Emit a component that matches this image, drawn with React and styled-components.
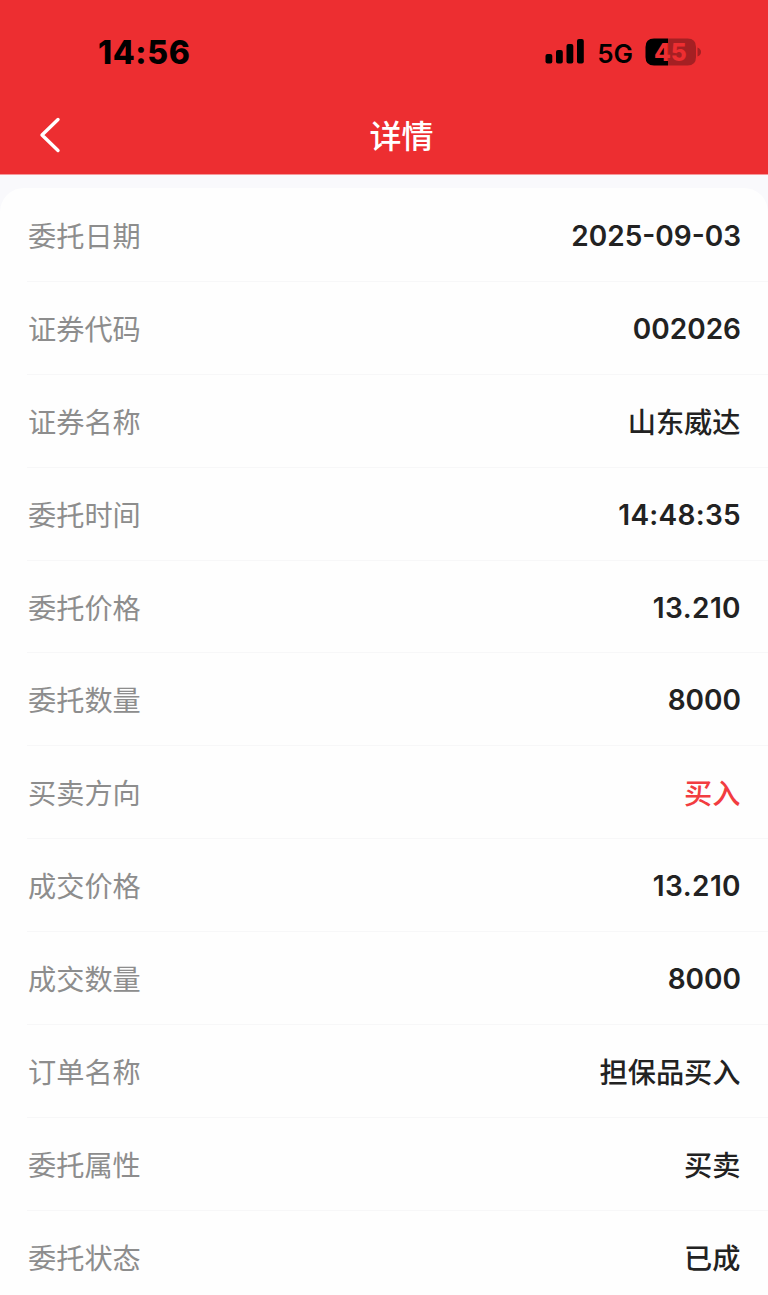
import React from "react";
import styled, { createGlobalStyle } from "styled-components";

const GlobalStyle = createGlobalStyle`
  * {
    box-sizing: border-box;
  }

  body {
    margin: 0;
    background: #f9f9fc;
    font-family: Inter, "Noto Sans CJK SC", sans-serif;
    overflow: hidden;
  }
`;

const orderData = [
  { label: "委托日期", value: "2025-09-03", type: "number" },
  { label: "证券代码", value: "002026", type: "number" },
  { label: "证券名称", value: "山东威达" },
  { label: "委托时间", value: "14:48:35", type: "number", spacing: "0.3px" },
  { label: "委托价格", value: "13.210", type: "number", spacing: "0.4px" },
  { label: "委托数量", value: "8000", type: "number" },
  { label: "买卖方向", value: "买入", color: "#f23c40" },
  { label: "成交价格", value: "13.210", type: "number", spacing: "0.4px" },
  { label: "成交数量", value: "8000", type: "number" },
  { label: "订单名称", value: "担保品买入" },
  { label: "委托属性", value: "买卖" },
  { label: "委托状态", value: "已成" },
];

const Screen = styled.div`
  width: 768px;
  height: 1295px;
  overflow: hidden;
`;

const Header = styled.header`
  height: 175px;
  background: #ed2e31;
  border-bottom: 1px solid #f5989b;
`;

const StatusBar = styled.div`
  display: flex;
  align-items: center;
  justify-content: space-between;
  height: 104px;
  padding: 0 67px 0 98px;
`;

const Clock = styled.span`
  margin-top: 2px;
  color: #000;
  font-size: 32px;
  font-weight: 800;
  letter-spacing: 0.6px;
  line-height: 40px;
`;

const StatusIcons = styled.div`
  display: flex;
  align-items: center;
`;

const Network = styled.span`
  margin: 3px 12px 0 12px;
  color: #000;
  font-size: 26px;
  font-weight: 600;
  line-height: 32px;
`;

const NavBar = styled.div`
  display: grid;
  grid-template-columns: 100px 1fr 100px;
  align-items: center;
  height: 62px;
`;

const BackButton = styled.button`
  display: flex;
  padding: 0 0 0 38px;
  border: 0;
  background: none;
`;

const Title = styled.h1`
  margin: 0;
  padding: 3px 0 0 35px;
  color: #fff;
  font-size: 32px;
  font-weight: 500;
  line-height: 40px;
  text-align: center;
`;

const Card = styled.main`
  margin-top: 13px;
  border-radius: 24px 24px 0 0;
  background: #fefefe;
`;

const Row = styled.div`
  display: flex;
  align-items: center;
  justify-content: space-between;
  height: 92.9px;
  margin-left: 27px;
  padding: 5px 27px 0 1px;
  box-shadow: 0 1px 0 #f7f7f8;
`;

const Label = styled.span`
  color: #8d8d8d;
  font-size: 28.2px;
  line-height: 40px;
`;

const Value = styled.span`
  color: ${(props) => props.$color || "#222"};
  font-size: 28.2px;
  font-weight: 500;
  line-height: 40px;
  margin-right: 0.5px;
`;

const NumberValue = styled(Value)`
  margin: 0 0 2px;
  font-size: 28px;
  font-weight: 600;
  letter-spacing: ${(props) => props.$spacing || "0"};
`;

const SignalIcon = () => (
  <svg width="40" height="26" viewBox="0 0 40 26">
    <rect x="0.5" y="15" width="6.8" height="9.5" rx="2" />
    <rect x="11" y="11" width="6.8" height="13.5" rx="2" />
    <rect x="21.5" y="5" width="6.8" height="19.5" rx="2" />
    <rect x="32" y="0" width="6.8" height="24.5" rx="2" />
  </svg>
);

const BatteryIcon = () => (
  <svg width="56" height="28" viewBox="0 0 56 28">
    <path d="M9 0.5H23V27.5H9Q0.5 27.5 0.5 19V9Q0.5 0.5 9 0.5Z" />
    <path
      d="M23 0.5H42.5Q51 0.5 51 9V19Q51 27.5 42.5 27.5H23Z"
      fill="#a52023"
    />
    <path d="M52.5 9.5Q56 11 56 14Q56 17 52.5 18.5Z" fill="#a52023" />
    <text
      x="25.3"
      y="22.5"
      fill="#ed2e31"
      fontSize="24.5"
      fontWeight="800"
      textAnchor="middle"
    >
      45
    </text>
  </svg>
);

const BackIcon = () => (
  <svg width="24" height="36" viewBox="0 0 24 36" fill="none">
    <path
      d="M20 2.5L4 18L20 33.5"
      stroke="#fff"
      strokeWidth="3.4"
      strokeLinecap="round"
      strokeLinejoin="round"
    />
  </svg>
);

const App = () => {
  return (
    <Screen>
      <GlobalStyle />
      <Header>
        <StatusBar>
          <Clock>14:56</Clock>
          <StatusIcons>
            <SignalIcon />
            <Network>5G</Network>
            <BatteryIcon />
          </StatusIcons>
        </StatusBar>
        <NavBar>
          <BackButton aria-label="返回">
            <BackIcon />
          </BackButton>
          <Title>详情</Title>
        </NavBar>
      </Header>
      <Card>
        {orderData.map((e) => (
          <Row key={e.label}>
            <Label>{e.label}</Label>
            {e.type === "number" ? (
              <NumberValue $spacing={e.spacing}>{e.value}</NumberValue>
            ) : (
              <Value $color={e.color}>{e.value}</Value>
            )}
          </Row>
        ))}
      </Card>
    </Screen>
  );
};

export default App;
